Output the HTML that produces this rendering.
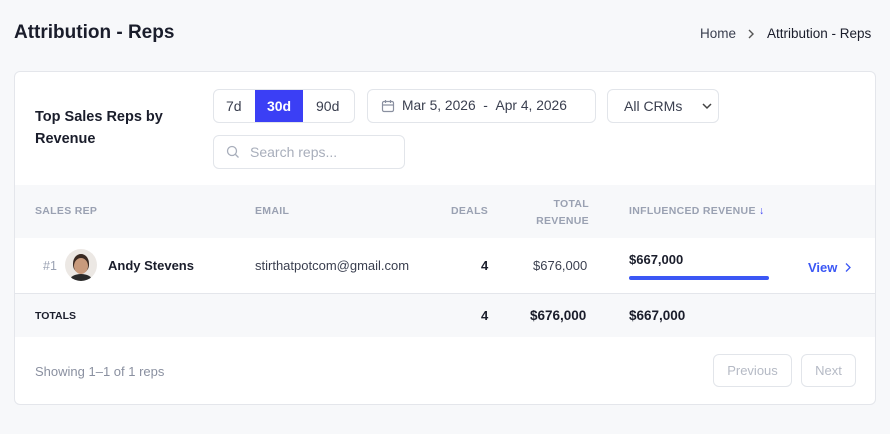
<!DOCTYPE html>
<html><head><style>
*{box-sizing:border-box;margin:0;padding:0}
body{width:890px;height:434px;background:#f7f8fa;font-family:"Liberation Sans",sans-serif;color:#1a1d2b;position:relative;overflow:hidden}
.a{position:absolute;white-space:nowrap}
.card{position:absolute;left:14px;top:71px;width:862px;height:334px;background:#fff;border:1px solid #e4e6eb;border-radius:6px;overflow:hidden}
.box{position:absolute;border:1px solid #e2e5ea;border-radius:6px;background:#fff}
.th{font-size:10.5px;font-weight:bold;color:#9aa1b2;letter-spacing:.3px}
</style></head><body>
<div class="a" style="left:14px;top:22px;font-size:19px;font-weight:bold;color:#1a1d2b">Attribution - Reps</div>
<div class="a" style="left:700px;top:26px;font-size:13.5px;color:#3a3f4f">Home</div>
<svg class="a" style="left:746px;top:28px" width="10" height="12" viewBox="0 0 10 12"><path d="M3 2l4 4-4 4" fill="none" stroke="#555" stroke-width="1.4"/></svg>
<div class="a" style="left:767px;top:26px;font-size:13.5px;color:#1a1d2b">Attribution - Reps</div>
<div class="card">
 <div class="a" style="left:20px;top:34px;font-size:14.5px;font-weight:bold;line-height:22px;white-space:normal;width:150px">Top Sales Reps by Revenue</div>
 <div class="box" style="left:198px;top:17px;width:142px;height:34px;overflow:hidden">
  <div class="a" style="left:12px;top:8px;font-size:14px;color:#3a3f4f">7d</div>
  <div class="a" style="left:41px;top:0;width:48px;height:32px;background:#3b3ff5;color:#fff;font-weight:bold;font-size:14px;text-align:center;line-height:32px">30d</div>
  <div class="a" style="left:102px;top:8px;font-size:14px;color:#3a3f4f">90d</div>
 </div>
 <div class="box" style="left:352px;top:17px;width:229px;height:34px">
  <svg class="a" style="left:13px;top:9px" width="14" height="14" viewBox="0 0 14 14"><rect x="1.5" y="2.5" width="11" height="10" rx="1.5" fill="none" stroke="#8a90a0" stroke-width="1.2"/><path d="M1.5 6h11M4.5 1v3M9.5 1v3" stroke="#8a90a0" stroke-width="1.2"/></svg>
  <div class="a" style="left:34px;top:8px;font-size:13.8px;color:#3a3f4f">Mar 5, 2026 &nbsp;- &nbsp;Apr 4, 2026</div>
 </div>
 <div class="box" style="left:592px;top:17px;width:112px;height:34px">
  <div class="a" style="left:16px;top:8px;font-size:14px;color:#3a3f4f">All CRMs</div>
  <svg class="a" style="left:94px;top:12px" width="10" height="8" viewBox="0 0 10 8"><path d="M1 2l4 4 4-4" fill="none" stroke="#444" stroke-width="1.5"/></svg>
 </div>
 <div class="box" style="left:198px;top:63px;width:192px;height:34px">
  <svg class="a" style="left:12px;top:9px" width="14" height="14" viewBox="0 0 14 14"><circle cx="6" cy="6" r="4.5" fill="none" stroke="#a8aebb" stroke-width="1.3"/><path d="M9.5 9.5l3 3" stroke="#a8aebb" stroke-width="1.3"/></svg>
  <div class="a" style="left:36px;top:8px;font-size:14px;color:#a8aebb">Search reps...</div>
 </div>
 <div class="a" style="left:0;top:113px;width:862px;height:53px;background:#f7f8fa"></div>
 <div class="a th" style="left:20px;top:133px">SALES REP</div>
 <div class="a th" style="left:240px;top:133px">EMAIL</div>
 <div class="a th" style="left:436px;top:133px">DEALS</div>
 <div class="a th" style="left:500px;top:124px;text-align:right;line-height:17px;width:74px">TOTAL<br>REVENUE</div>
 <div class="a th" style="left:614px;top:133px">INFLUENCED REVENUE <span style="color:#3b3ff5">&#8595;</span></div>
 <div class="a" style="left:28px;top:187px;font-size:12.5px;color:#9aa1b2">#1</div>
 <div class="a" style="left:50px;top:177px;width:32px;height:32px;border-radius:50%;background:#ece8e4;overflow:hidden">
  <div class="a" style="left:8px;top:5px;width:16px;height:19px;border-radius:50% 50% 45% 45%;background:#3a2a22"></div>
  <div class="a" style="left:9px;top:9px;width:14px;height:16px;border-radius:50%;background:#c89a7c"></div>
  <div class="a" style="left:5px;top:25px;width:22px;height:12px;border-radius:50%;background:#2a2a2a"></div>
 </div>
 <div class="a" style="left:93px;top:186px;font-size:13px;font-weight:bold">Andy Stevens</div>
 <div class="a" style="left:240px;top:186px;font-size:13px;color:#3a3f4f">stirthatpotcom@gmail.com</div>
 <div class="a" style="left:466px;top:186px;font-size:13px;font-weight:bold">4</div>
 <div class="a" style="left:518px;top:186px;font-size:13px;color:#3a3f4f">$676,000</div>
 <div class="a" style="left:614px;top:180px;font-size:13px;font-weight:bold">$667,000</div>
 <div class="a" style="left:614px;top:204px;width:140px;height:4px;border-radius:2px;background:#3b57f5"></div>
 <div class="a" style="left:793px;top:188px;font-size:13px;font-weight:bold;color:#3b57f5">View</div>
 <svg class="a" style="left:829px;top:190px" width="8" height="11" viewBox="0 0 8 11"><path d="M2 1.5l4 4-4 4" fill="none" stroke="#3b57f5" stroke-width="1.3"/></svg>
 <div class="a" style="left:0;top:221px;width:862px;height:44px;background:#f7f8fa;border-top:1px solid #e4e6eb"></div>
 <div class="a" style="left:20px;top:238px;font-size:10.5px;font-weight:bold">TOTALS</div>
 <div class="a" style="left:466px;top:236px;font-size:13px;font-weight:bold">4</div>
 <div class="a" style="left:515px;top:236px;font-size:13.5px;font-weight:bold">$676,000</div>
 <div class="a" style="left:614px;top:236px;font-size:13.5px;font-weight:bold">$667,000</div>
 <div class="a" style="left:20px;top:292px;font-size:13px;color:#8a90a0">Showing 1–1 of 1 reps</div>
 <div class="box" style="left:698px;top:282px;width:79px;height:33px;font-size:13px;color:#b5bac5;text-align:center;line-height:31px">Previous</div>
 <div class="box" style="left:786px;top:282px;width:55px;height:33px;font-size:13px;color:#b5bac5;text-align:center;line-height:31px">Next</div>
</div>
</body></html>
